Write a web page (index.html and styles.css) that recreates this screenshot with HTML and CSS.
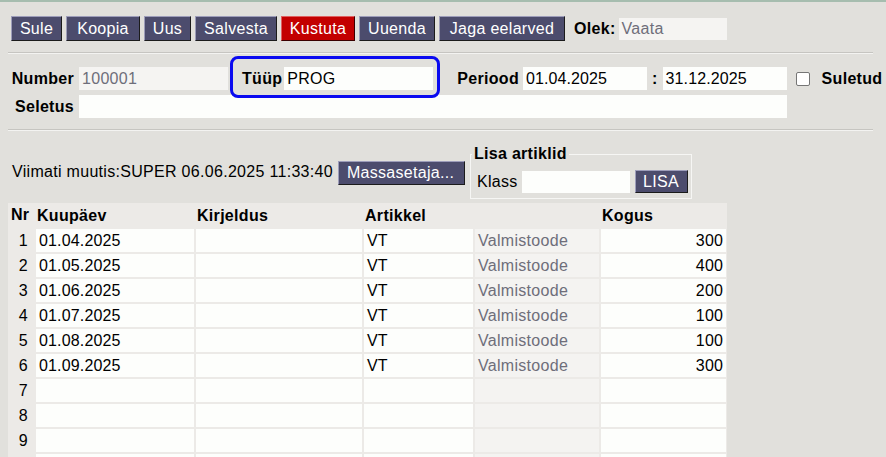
FILE: index.html
```html
<!DOCTYPE html>
<html lang="et">
<head>
<meta charset="utf-8">
<title>Eelarve</title>
<link rel="stylesheet" href="styles.css">
</head>
<body>
<div class="toolbar">
  <button class="btn w-sule">Sule</button>
  <button class="btn w-koopia">Koopia</button>
  <button class="btn w-uus">Uus</button>
  <button class="btn w-salvesta">Salvesta</button>
  <button class="btn btn-red w-kustuta">Kustuta</button>
  <button class="btn w-uuenda">Uuenda</button>
  <button class="btn w-jaga">Jaga eelarved</button>
  <span class="lbl olek">Olek:</span>
  <div class="field ro w-olek">Vaata</div>
</div>
<div class="rule"></div>
<div class="form">
  <div class="frow">
    <span class="lbl lcol">Number</span>
    <div class="field ro w-number">100001</div>
    <div class="hl">
      <span class="lbl">Tüüp</span>
      <div class="field w-tyyp">PROG</div>
    </div>
    <span class="lbl periood">Periood</span>
    <div class="field w-date">01.04.2025</div>
    <span class="lbl colon">:</span>
    <div class="field w-date">31.12.2025</div>
    <span class="chk"></span>
    <span class="lbl">Suletud</span>
  </div>
  <div class="frow2">
    <span class="lbl lcol">Seletus</span>
    <div class="field w-seletus"></div>
  </div>
</div>
<div class="rule rule2"></div>
<div class="info">
  <span class="txt">Viimati muutis:SUPER 06.06.2025 11:33:40</span>
  <button class="btn w-mass"><span class="ell">Massasetaja...</span></button>
  <fieldset class="fs">
    <legend>Lisa artiklid</legend>
    <div class="fsrow">
      <span class="txt">Klass</span>
      <div class="field w-klass"></div>
      <button class="btn w-lisa">LISA</button>
    </div>
  </fieldset>
</div>
<div class="grid">
  <div class="th nr">Nr</div>
  <div class="th">Kuupäev</div>
  <div class="th">Kirjeldus</div>
  <div class="th">Artikkel</div>
  <div class="th"></div>
  <div class="th">Kogus</div>

  <div class="nr">1</div><div class="c">01.04.2025</div><div class="c"></div><div class="c">VT</div><div class="c ro">Valmistoode</div><div class="c num">300</div>
  <div class="nr">2</div><div class="c">01.05.2025</div><div class="c"></div><div class="c">VT</div><div class="c ro">Valmistoode</div><div class="c num">400</div>
  <div class="nr">3</div><div class="c">01.06.2025</div><div class="c"></div><div class="c">VT</div><div class="c ro">Valmistoode</div><div class="c num">200</div>
  <div class="nr">4</div><div class="c">01.07.2025</div><div class="c"></div><div class="c">VT</div><div class="c ro">Valmistoode</div><div class="c num">100</div>
  <div class="nr">5</div><div class="c">01.08.2025</div><div class="c"></div><div class="c">VT</div><div class="c ro">Valmistoode</div><div class="c num">100</div>
  <div class="nr">6</div><div class="c">01.09.2025</div><div class="c"></div><div class="c">VT</div><div class="c ro">Valmistoode</div><div class="c num">300</div>
  <div class="nr">7</div><div class="c"></div><div class="c"></div><div class="c"></div><div class="c ro"></div><div class="c num"></div>
  <div class="nr">8</div><div class="c"></div><div class="c"></div><div class="c"></div><div class="c ro"></div><div class="c num"></div>
  <div class="nr">9</div><div class="c"></div><div class="c"></div><div class="c"></div><div class="c ro"></div><div class="c num"></div>
  <div class="nr"></div><div class="c"></div><div class="c"></div><div class="c"></div><div class="c ro"></div><div class="c num"></div>
</div>
</body>
</html>
```
FILE: styles.css
```css
* { box-sizing: border-box; }
html, body { height: 100%; }
body {
  margin: 0;
  background: #e1e0dc;
  border-top: 2px solid #a6bdaf;
  font-family: "Liberation Sans", Arial, sans-serif;
  font-size: 16px;
  letter-spacing: 0.3px;
  color: #000;
  overflow: hidden;
}
.toolbar {
  display: flex;
  align-items: center;
  margin-top: 14px;
  padding-left: 11px;
  height: 25px;
}
.btn {
  height: 25px;
  margin: 0 4px 0 0;
  padding: 0;
  background: #4c4c6d;
  color: #fff;
  font-family: "Liberation Sans", Arial, sans-serif;
  font-size: 16px;
  letter-spacing: 0.3px;
  border: 1px solid;
  border-color: #9d9dba #1b1b1b #1b1b1b #9d9dba;
  text-align: center;
  line-height: 22px;
}
.btn-red { background: #c30000; border-color: #e06060 #3a0000 #3a0000 #e06060; }
.w-sule { width: 51px; }
.w-koopia { width: 74px; }
.w-uus { width: 47px; }
.w-salvesta { width: 82px; }
.w-kustuta { width: 74px; }
.w-uuenda { width: 76px; }
.w-jaga { width: 126px; }
.lbl { font-weight: bold; white-space: nowrap; }
.olek { margin-left: 5px; margin-right: 3px; }
.field {
  height: 23px;
  background: #fdfefc;
  padding: 0 3px;
  line-height: 23px;
  white-space: nowrap;
  overflow: hidden;
}
.field.ro { background: #f5f4f2; color: #6e6e7a; }
.w-olek { width: 108px; height: 22px; line-height: 22px; }
.rule {
  margin: 11px 13px 0 8px;
  border-top: 1px solid #c6c5c1;
  border-bottom: 1px solid #f3f3f1;
}
.form { margin-top: 6px; }
.frow {
  display: flex;
  align-items: center;
  height: 35px;
  padding: 7px 0 5px;
}
.lcol { width: 74px; text-align: right; margin-right: 5px; }
.w-number { width: 149px; }
.hl {
  display: flex;
  align-items: center;
  align-self: stretch;
  margin: -8px 0 -5px 5px;
  padding: 8px 4px 5px 9px;
  outline: 3px solid #0a0af0;
  border-radius: 5px;
  position: relative;
  z-index: 1;
}
.hl .lbl { margin-right: 2px; }
.w-tyyp { width: 149px; }
.periood { margin-left: 20px; margin-right: 4px; }
.w-date { width: 124px; letter-spacing: 0.1px; }
.colon { margin: 0 5px 0 5px; }
.chk {
  width: 14px;
  height: 14px;
  margin: 0 12px 0 9px;
  background: #fff;
  border: 1px solid #767676;
  border-radius: 2px;
}
.frow2 { display: flex; align-items: center; height: 23px; }
.w-seletus { width: 708px; }
.rule2 { margin-top: 11px; }
.info {
  display: flex;
  align-items: center;
  margin-top: 14px;
  padding-left: 12px;
}
.txt { white-space: nowrap; }
.w-mass {
  width: 127px;
  height: 24px;
  margin-left: 5px;
  margin-top: 1px;
  padding: 0 6px 0 8px;
  text-align: left;
}
.ell {
  display: block;
  overflow: hidden;
  text-overflow: ellipsis;
  white-space: nowrap;
}
.fs {
  margin: 0 0 0 1px;
  padding: 0 3px 5px 6px;
  border: 1px solid #f6f6f4;
  width: 221px;
}
.fs legend {
  font-weight: bold;
  padding: 0 2px;
  margin-left: -5px;
  line-height: 18px;
}
.fsrow { display: flex; align-items: center; margin-top: 7px; }
.w-klass { width: 108px; height: 22px; margin-left: 4px; margin-right: 5px; }
.w-lisa { width: 53px; height: 23px; margin: 0; }
.grid {
  margin: 4px 0 0 8px;
  width: 719px;
  display: grid;
  grid-template-columns: 26px 158px 166px 109px 124px 125px;
  grid-auto-rows: 23px;
  grid-template-rows: 24px;
  column-gap: 2px;
  row-gap: 2px;
  background: #eceae7;
  padding-right: 1px;
}
.th { font-weight: bold; line-height: 25px; padding-left: 1px; }
.th.nr { padding-left: 3px; padding-right: 0; text-align: left; }
.nr { text-align: right; padding-right: 6px; line-height: 23px; }
.c {
  background: #fdfefc;
  line-height: 23px;
  padding: 0 3px;
  white-space: nowrap;
  letter-spacing: 0.15px;
}
.c.ro { background: #f4f3f1; color: #6e6e7a; letter-spacing: 0.3px; }
.c.num { text-align: right; }
```
